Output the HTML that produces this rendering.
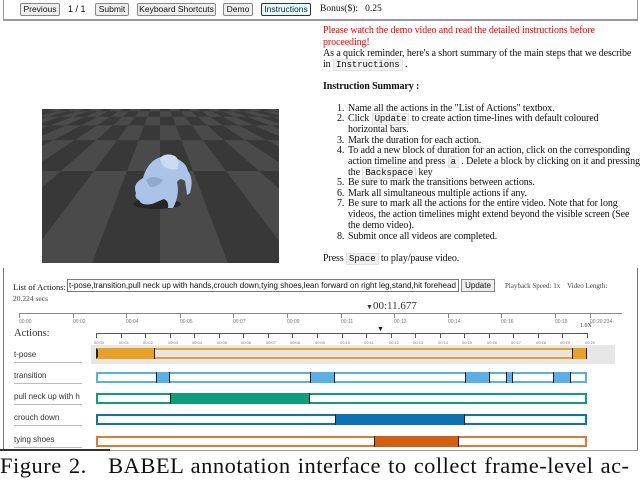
<!DOCTYPE html>
<html><head><meta charset="utf-8"><style>
*{margin:0;padding:0;box-sizing:border-box}
body{width:640px;height:481px;background:#fff;position:relative;overflow:hidden;font-family:"Liberation Serif",serif;color:#111}
.a{position:absolute;white-space:nowrap}
.btn{position:absolute;top:3px;height:13px;border:1px solid #888;background:#eee;font:8.5px "Liberation Sans",sans-serif;text-align:center;line-height:11px;border-radius:2px;white-space:nowrap;overflow:hidden}
.code{font-family:"Liberation Mono",monospace;background:#f0f0f0;border:1px solid #e2e2e2;padding:0 2px;font-size:9px}
.t{position:absolute;left:323px;font-size:10px;line-height:11px;white-space:nowrap;letter-spacing:-0.1px}
.li{left:348px}
.n{position:absolute;left:-11px}
.sm{font:5px "Liberation Sans",sans-serif;color:#777;position:absolute}
.lab{position:absolute;left:14px;font:8px "Liberation Sans",sans-serif;color:#333;border-bottom:1px solid #bbb;width:68px;height:13px}
.bar{position:absolute;left:96px;width:491px;height:11px;border:2px solid}
.seg{position:absolute;top:-2px;height:11px;border-left:1.5px solid #222;border-right:1.5px solid #222}
</style></head><body>
<div class="a" style="left:3px;top:0;width:635px;height:21px;border-left:1px solid #999;border-right:1px solid #999;border-bottom:2px solid #999"></div>
<div class="btn" style="left:20px;width:40px">Previous</div>
<div class="a" style="left:68px;top:4px;font:9px 'Liberation Sans',sans-serif">1 / 1</div>
<div class="btn" style="left:95px;width:34px">Submit</div>
<div class="btn" style="left:137px;width:79px">Keyboard Shortcuts</div>
<div class="btn" style="left:223px;width:30px">Demo</div>
<div class="btn" style="left:261px;width:50px;background:#dff;border-color:#333;color:#222">Instructions</div>
<div class="a" style="left:320px;top:4px;font-size:9.5px">Bonus($): &nbsp; 0.25</div>

<div class="t" style="top:25px;color:#f00">Please watch the demo video and read the detailed instructions before</div>
<div class="t" style="top:37px;color:#f00">proceeding!</div>
<div class="t" style="top:48px">As a quick reminder, here's a short summary of the main steps that we describe</div>
<div class="t" style="top:59px">in <span class="code">Instructions</span> .</div>
<div class="t" style="top:81px;font-weight:bold">Instruction Summary :</div>
<div class="t li" style="top:103px"><span class="n">1.</span>Name all the actions in the "List of Actions" textbox.</div>
<div class="t li" style="top:113px"><span class="n">2.</span>Click <span class="code">Update</span> to create action time-lines with default coloured</div>
<div class="t li" style="top:124px">horizontal bars.</div>
<div class="t li" style="top:135px"><span class="n">3.</span>Mark the duration for each action.</div>
<div class="t li" style="top:145px"><span class="n">4.</span>To add a new block of duration for an action, click on the corresponding</div>
<div class="t li" style="top:156px">action timeline and press <span class="code">a</span> . Delete a block by clicking on it and pressing</div>
<div class="t li" style="top:167px">the <span class="code">Backspace</span> key</div>
<div class="t li" style="top:177px"><span class="n">5.</span>Be sure to mark the transitions between actions.</div>
<div class="t li" style="top:188px"><span class="n">6.</span>Mark all simultaneous multiple actions if any.</div>
<div class="t li" style="top:198px"><span class="n">7.</span>Be sure to mark all the actions for the entire video. Note that for long</div>
<div class="t li" style="top:209px">videos, the action timelines might extend beyond the visible screen (See</div>
<div class="t li" style="top:220px">the demo video).</div>
<div class="t li" style="top:231px"><span class="n">8.</span>Submit once all videos are completed.</div>
<div class="t" style="top:253px">Press <span class="code">Space</span> to play/pause video.</div>

<div class="a" style="left:42px;top:109px;width:237px;height:154px;overflow:hidden;background:#383838">
 <svg style="position:absolute;left:0;top:0" width="237" height="154" id="cb"></svg>
 <svg style="position:absolute;left:0;top:0" width="237" height="154">
  <ellipse cx="115" cy="95" rx="24" ry="5" fill="#262626"/>
  <path d="M94 84 Q90 75 101 69 Q104 58 111 52 Q122 44 133 49 Q144 53 146 62 Q152 70 148 84 L145 86 Q144 78 143 72 Q138 68 135 73 Q138 86 131 99 L126 99 Q127 92 122 90 L110 95 Q99 97 97 91 Q92 89 94 84Z" fill="#aac3e6"/>
  <path d="M118 49 Q124 43 133 47 Q139 52 135 60 Q127 62 120 56Z" fill="#cadbf3"/>
  <path d="M104 71 Q112 65 121 71 Q117 78 108 78Z" fill="#8eaad0"/>
 </svg>
</div>

<div class="a" style="left:3px;top:268px;width:635px;height:183px;border-left:1px solid #777;border-right:1px solid #777"></div>
<div class="a" style="left:0;top:449px;width:110px;height:2px;background:#333"></div>
<div class="a" style="left:110px;top:450px;width:528px;height:1px;background:#999"></div>
<div class="a" style="left:13px;top:282px;font-size:8.5px">List of Actions:</div>
<div class="a" style="left:67px;top:279px;width:392px;height:13px;border:1px solid #777;font:8px 'Liberation Sans',sans-serif;line-height:11px;padding-left:1px;overflow:hidden">t-pose,transition,pull neck up with hands,crouch down,tying shoes,lean forward on right leg,stand,hit forehead w</div>
<div class="a" style="left:461px;top:279px;width:34px;height:13px;border:1px solid #888;background:#eee;font:8px 'Liberation Sans',sans-serif;text-align:center;line-height:11px">Update</div>
<div class="a" style="left:505px;top:282px;font-size:7px;color:#444">Playback Speed: 1x &nbsp;&nbsp; Video Length:</div>
<div class="a" style="left:13px;top:294px;font-size:7.5px;color:#444">20.224 secs</div>
<div class="a" style="left:366px;top:300px;font-size:11px;color:#333"><span style="font-size:7px">▼</span>00:11.677</div>
<div class="a" style="left:19px;top:313px;width:603px;height:1px;background:#888"></div>
<div id="r1"></div>
<div class="a" style="left:14px;top:328px;font-size:10.5px;color:#333">Actions:</div>
<div class="a" style="left:96px;top:333px;width:491px;height:1px;background:#555"></div>
<div class="a" style="left:377px;top:325px;font-size:7px">▼</div>
<div class="a" style="left:580px;top:323px;font-size:6px;color:#333">1.0X</div>
<div id="r2"></div>

<div class="a" style="left:91px;top:345px;width:524px;height:19px;background:#e6e6e6"></div>
<div class="lab" style="top:350px">t-pose</div>
<div class="bar" style="top:348px;border-color:#e8a124;border-left-color:#222"><div style="position:absolute;left:0;top:-2px;width:57px;height:11px;background:#e8a124;border-right:1.5px solid #222"></div><div style="position:absolute;left:474px;top:-2px;width:15px;height:11px;background:#e8a124;border-left:1.5px solid #222;border-right:1.5px solid #222"></div></div>

<div class="lab" style="top:371px">transition</div>
<div class="bar" style="top:372px;border-color:#5aafe6;height:11px">
 <div class="seg" style="left:58px;width:14px;background:#5aafe6"></div>
 <div class="seg" style="left:212px;width:25px;background:#5aafe6"></div>
 <div class="seg" style="left:367px;width:25px;background:#5aafe6"></div>
 <div class="seg" style="left:408px;width:7px;background:#5aafe6"></div>
 <div class="seg" style="left:455px;width:18px;background:#5aafe6"></div>
</div>
<div class="lab" style="top:392px">pull neck up with h</div>
<div class="bar" style="top:393px;border-color:#0ba07a"><div class="seg" style="left:72px;width:140px;background:#0ba07a"></div></div>
<div class="lab" style="top:413px">crouch down</div>
<div class="bar" style="top:414px;border-color:#0a72b5"><div class="seg" style="left:237px;width:130px;background:#0a72b5;border-color:#0a72b5 #222"></div></div>
<div class="lab" style="top:435px">tying shoes</div>
<div class="bar" style="top:436px;border-color:#e07a30"><div class="seg" style="left:276px;width:85px;background:#d35f10"></div></div>

<div class="a" style="left:0;top:453px;font-size:22.5px;letter-spacing:0.5px;word-spacing:1px;color:#111">Figure 2.&nbsp;&nbsp; BABEL annotation interface to collect frame-level ac-</div>

<script>
var l=["00:00","00:02","00:04","00:05","00:07","00:09","00:11","00:13","00:14","00:16","00:18","00:20.234"],h="";
for(var i=0;i<12;i++){var x=19+i*53.6;if(i==11)x=590;h+='<div class="a" style="left:'+Math.round(x)+'px;top:313px;width:1px;height:5px;background:#888"></div><div class="sm" style="left:'+Math.round(x)+'px;top:319px">'+l[i]+'</div>';}
document.getElementById("r1").outerHTML=h;h="";
for(var i=0;i<=20;i++){var x=96+i*24.55,s=(i<10?"0":"")+i;h+='<div class="a" style="left:'+Math.round(x)+'px;top:333px;width:1px;height:5px;background:#555"></div><div class="sm" style="left:'+(Math.round(x)-2)+'px;top:340px;font-size:4px">00:'+s+'</div>';}
document.getElementById("r2").outerHTML=h;
var f=60,cx=118,hy=-25,ch=2.9,c=1.1,s='';
function P(X,z){return (cx+f*X/z).toFixed(1)+','+(hy+f*ch/z).toFixed(1);}
for(var j=0;j<16;j++){var z0=0.9+j*c,z1=z0+c;for(var i=-14;i<14;i++){if((i+j)%2)continue;var X0=i*c,X1=X0+c;s+='<polygon points="'+P(X0,z0)+' '+P(X1,z0)+' '+P(X1,z1)+' '+P(X0,z1)+'" fill="#4a4a4a"/>';}}
document.getElementById("cb").innerHTML=s;
</script>
</body></html>
